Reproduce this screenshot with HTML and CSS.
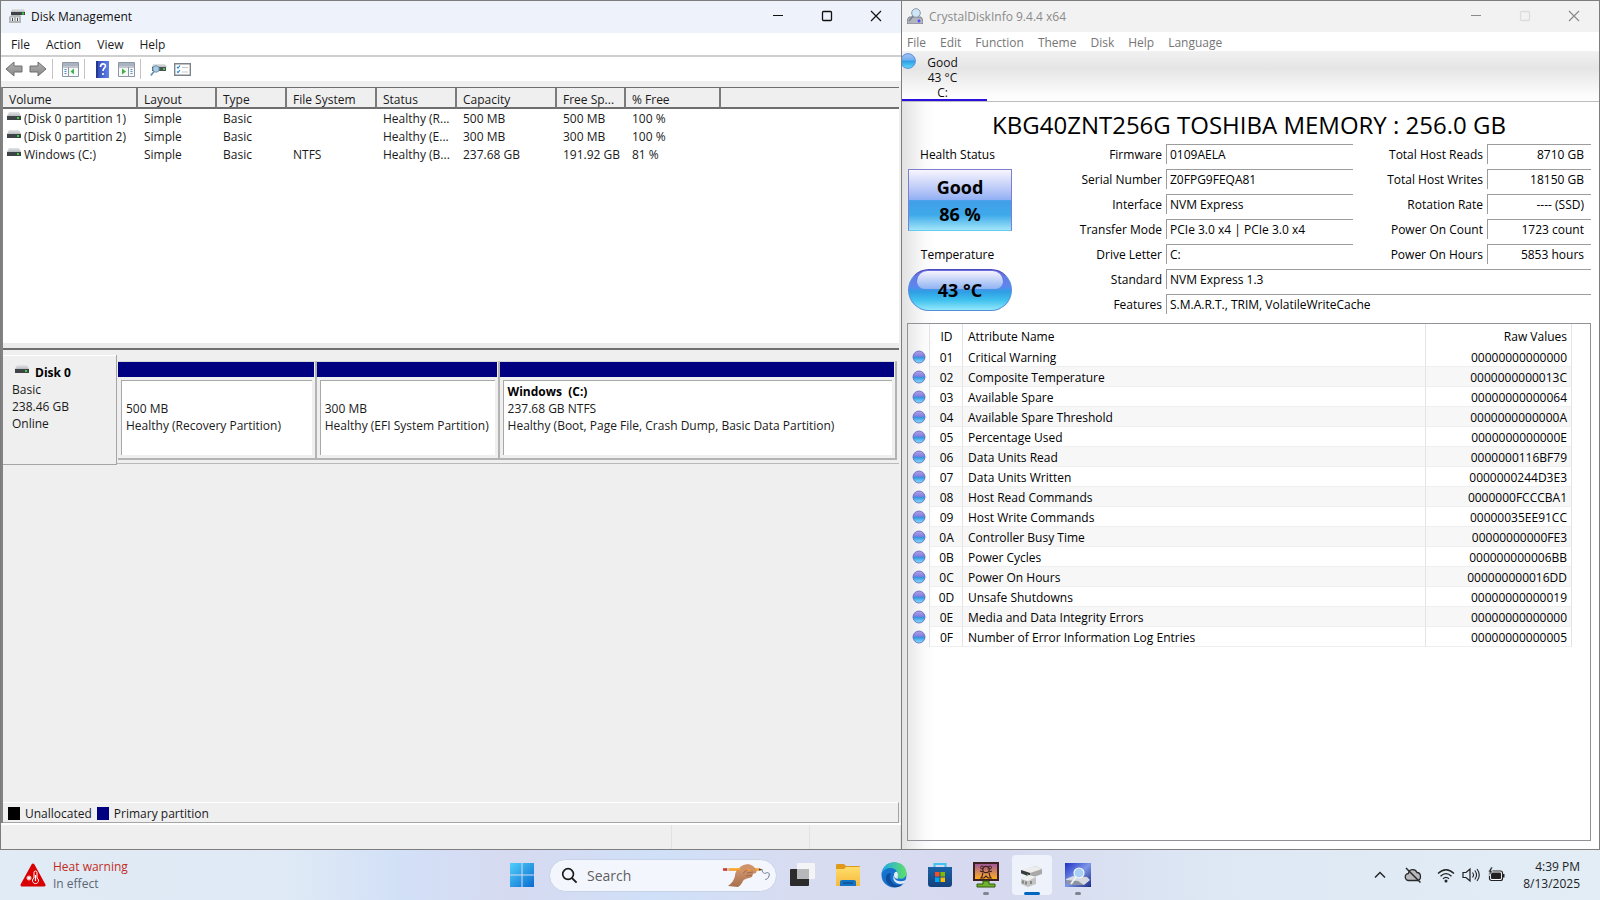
FILE: index.html
```html
<!DOCTYPE html>
<html lang="en">
<head>
    <meta charset="UTF-8">
    <meta name="viewport" content="width=device-width, initial-scale=1">
    <title>Disk Management</title>
    <link rel="stylesheet" href="styles.css">
</head>
<body>

<svg class="defs" aria-hidden="true">
    <defs>
        <linearGradient id="gTop" x1="0" y1="0" x2="0" y2="1"><stop offset="0" stop-color="#e3e5e7"/><stop offset="1" stop-color="#b9bcbf"/></linearGradient>
        <linearGradient id="gArrow" x1="0" y1="0" x2="0" y2="1"><stop offset="0" stop-color="#b0b0b0"/><stop offset="1" stop-color="#8a8a8a"/></linearGradient>
        <linearGradient id="gHelp" x1="0" y1="0" x2="1" y2="0"><stop offset="0" stop-color="#2d46b4"/><stop offset="1" stop-color="#5f83e8"/></linearGradient>
        <linearGradient id="gBall" x1="0" y1="0" x2="0" y2="1"><stop offset="0" stop-color="#b9a0e4"/><stop offset=".45" stop-color="#7d7fe0"/><stop offset=".5" stop-color="#2f8fdc"/><stop offset="1" stop-color="#8fe6fb"/></linearGradient>
        <linearGradient id="gBlue" x1="0" y1="0" x2="0" y2="1"><stop offset="0" stop-color="#a9c4f2"/><stop offset=".45" stop-color="#69aef0"/><stop offset=".5" stop-color="#2b9be4"/><stop offset="1" stop-color="#62dcf8"/></linearGradient>
        <linearGradient id="gWin" x1="0" y1="0" x2="1" y2="1"><stop offset="0" stop-color="#4fd0fb"/><stop offset="1" stop-color="#0a6bd0"/></linearGradient>
        <linearGradient id="gFolder" x1="0" y1="0" x2="0" y2="1"><stop offset="0" stop-color="#ffdd6b"/><stop offset="1" stop-color="#f6b93a"/></linearGradient>
        <linearGradient id="gEdge" x1="0" y1="0" x2="1" y2="0"><stop offset="0" stop-color="#1ea7e8"/><stop offset="1" stop-color="#5fe06a"/></linearGradient>
        <linearGradient id="gStore" x1="0" y1="0" x2="0" y2="1"><stop offset="0" stop-color="#1a62a8"/><stop offset="1" stop-color="#14417c"/></linearGradient>
        <linearGradient id="gSun" x1="0" y1="0" x2="0" y2="1"><stop offset="0" stop-color="#a25a9c"/><stop offset="1" stop-color="#ffae1e"/></linearGradient>
        <linearGradient id="gCdi" x1="0" y1="0" x2="1" y2="1"><stop offset="0" stop-color="#1f2fc4"/><stop offset=".5" stop-color="#7d97e8"/><stop offset="1" stop-color="#1c2a86"/></linearGradient>
        <linearGradient id="gSkin" x1="0" y1="0" x2="0" y2="1"><stop offset="0" stop-color="#dba07a"/><stop offset="1" stop-color="#a86f4c"/></linearGradient>
    </defs>
    <symbol id="drive" viewBox="0 0 14 9">
        <path d="M2 0h10l2 4H0z" fill="url(#gTop)"/>
        <path d="M0 4h14v4H0z" fill="#3d4347"/>
        <path d="M10 5h2v2h-2z" fill="#35d335"/>
    </symbol>
    <symbol id="ball" viewBox="0 0 14 14">
        <circle cx="7" cy="7" r="6" fill="url(#gBall)" stroke="#5a62c4" stroke-width=".8"/>
    </symbol>
    <symbol id="ball-blue" viewBox="0 0 16 16">
        <circle cx="8" cy="8" r="7.400" fill="url(#gBlue)" stroke="#5b8fe0"/>
    </symbol>
    <symbol id="min" viewBox="0 0 12 12"><path d="M1 5.500h10" stroke="currentColor" fill="none"/></symbol>
    <symbol id="max" viewBox="0 0 12 12"><rect x="1.500" y="1.500" width="9" height="9" rx="1" stroke="currentColor" fill="none" stroke-width="1.300"/></symbol>
    <symbol id="close" viewBox="0 0 12 12"><path d="M1 1l10 10M11 1L1 11" stroke="currentColor" fill="none" stroke-width="1.200"/></symbol>
</svg>

<main class="desktop">

    <section class="window dm">
        <header class="titlebar">
            <svg class="app-icon" viewBox="0 0 16 16">
                <path d="M3 1h12l1 3H2z" fill="url(#gTop)"/>
                <path d="M2 4h14v3H2z" fill="#3d4347"/>
                <path d="M13 4.500h2v2h-2z" fill="#35d335"/>
                <path d="M1 8l2-1h8l1 1v7H0V9z" fill="#b4b7ba"/>
                <path d="M2 9.500h3v3.500H2zM7 9.500h3v3.500H7z" fill="#f2f2f2"/>
                <path d="M3 10h1v3H3zM8 10h1v3H8z" fill="#44484b"/>
            </svg>
            <h1>Disk Management</h1>
            <div class="controls">
                <button aria-label="Minimize"><svg><use href="#min"/></svg></button>
                <button aria-label="Maximize"><svg><use href="#max"/></svg></button>
                <button aria-label="Close"><svg><use href="#close"/></svg></button>
            </div>
        </header>
        <nav class="menu">
            <button>File</button>
            <button>Action</button>
            <button>View</button>
            <button>Help</button>
        </nav>
        <div class="toolbar">
            <button aria-label="Back"><svg class="arrow" viewBox="0 0 18 16"><path d="M1 8l8-7v4h8v6H9v4z" fill="url(#gArrow)" stroke="#6e6e6e"/></svg></button>
            <button aria-label="Forward"><svg class="arrow" viewBox="0 0 18 16"><path d="M17 8L9 1v4H1v6h8v4z" fill="url(#gArrow)" stroke="#6e6e6e"/></svg></button>
            <span class="sep"></span>
            <button aria-label="Show console tree"><svg class="pane" viewBox="0 0 17 15">
                <path d="M.5.500h16v14H.5z" fill="#f7f8fa" stroke="#8d96a3"/><path d="M1 1h15v3H1z" fill="#aab3c1"/><path d="M1 5h15M6.500 5v9" stroke="#8d96a3"/>
                <path d="M2.500 7.500h2M2.500 9.500h2M2.500 11.500h2" stroke="#4f8fc4"/><path d="M12 6.500v6L8.500 9.500z" fill="#3db53d"/></svg></button>
            <span class="sep"></span>
            <button aria-label="Help"><svg class="help" viewBox="0 0 13 17"><path d="M0 0h13v17H0z" fill="url(#gHelp)"/><path d="M0 0h2v17H0z" fill="#23388f"/><path d="M4.500 6c0-4 5-4 5-1 0 2-2.500 2-2.500 5" fill="none" stroke="#fff" stroke-width="1.600"/><circle cx="7" cy="13" r="1.100" fill="#fff"/></svg></button>
            <button aria-label="Show action pane"><svg class="pane" viewBox="0 0 17 15">
                <path d="M.5.500h16v14H.5z" fill="#f7f8fa" stroke="#8d96a3"/><path d="M1 1h15v3H1z" fill="#aab3c1"/><path d="M1 5h15M10.500 5v9" stroke="#8d96a3"/>
                <path d="M12.500 7.500h2M12.500 9.500h2M12.500 11.500h2" stroke="#4f8fc4"/><path d="M4 6.500v6L8 9.500z" fill="#3db53d"/></svg></button>
            <span class="sep"></span>
            <button aria-label="Rescan disks"><svg class="pane" viewBox="0 0 17 15">
                <path d="M3 2h12l2 3H2z" fill="url(#gTop)"/><path d="M2 5h14v4H2z" fill="#4c5357"/><path d="M13 6h2v2h-2z" fill="#35d335"/>
                <circle cx="6" cy="7" r="3.200" fill="#a9cde6" stroke="#6f93ad"/><path d="M4 9.500L.8 13.500" stroke="#6a94b5" stroke-width="1.800"/></svg></button>
            <button aria-label="Properties"><svg class="pane" viewBox="0 0 17 15">
                <path d="M.7 1.700h15.600v11.600H.7z" fill="#fff" stroke="#7e8389" stroke-width="1.400"/>
                <path d="M3 5l1 1 2-2.500M3 9.500l1 1L6 8" fill="none" stroke="#2d87d6" stroke-width="1.200"/><path d="M8 5.500h6M8 10h6" stroke="#c3c7cc"/></svg></button>
        </div>

        <div class="view">
            <div class="volumes">
                <table>
                    <colgroup>
                        <col class="c-vol"><col class="c-lay"><col class="c-type"><col class="c-fs"><col class="c-stat"><col class="c-cap"><col class="c-free"><col class="c-pct"><col>
                    </colgroup>
                    <thead>
                        <tr><th>Volume</th><th>Layout</th><th>Type</th><th>File System</th><th>Status</th><th>Capacity</th><th>Free Sp...</th><th>% Free</th><th></th></tr>
                    </thead>
                    <tbody>
                        <tr><td><svg class="drive"><use href="#drive"/></svg>(Disk 0 partition 1)</td><td>Simple</td><td>Basic</td><td></td><td>Healthy (R...</td><td>500 MB</td><td>500 MB</td><td>100 %</td><td></td></tr>
                        <tr><td><svg class="drive"><use href="#drive"/></svg>(Disk 0 partition 2)</td><td>Simple</td><td>Basic</td><td></td><td>Healthy (E...</td><td>300 MB</td><td>300 MB</td><td>100 %</td><td></td></tr>
                        <tr><td><svg class="drive"><use href="#drive"/></svg>Windows (C:)</td><td>Simple</td><td>Basic</td><td>NTFS</td><td>Healthy (B...</td><td>237.68 GB</td><td>191.92 GB</td><td>81 %</td><td></td></tr>
                    </tbody>
                </table>
            </div>

            <div class="graph">
                <div class="disk">
                    <div class="disk-info">
                        <h2><svg class="drive"><use href="#drive"/></svg>Disk 0</h2>
                        <p>Basic</p>
                        <p>238.46 GB</p>
                        <p>Online</p>
                    </div>
                    <div class="parts">
                        <div class="part recovery">
                            <div class="bar"></div>
                            <div class="box"><p>&nbsp;</p><p>500 MB</p><p>Healthy (Recovery Partition)</p></div>
                        </div>
                        <div class="part efi">
                            <div class="bar"></div>
                            <div class="box"><p>&nbsp;</p><p>300 MB</p><p>Healthy (EFI System Partition)</p></div>
                        </div>
                        <div class="part system">
                            <div class="bar"></div>
                            <div class="box"><h3>Windows&nbsp; (C:)</h3><p>237.68 GB NTFS</p><p>Healthy (Boot, Page File, Crash Dump, Basic Data Partition)</p></div>
                        </div>
                    </div>
                </div>
            </div>

            <div class="legend">
                <span class="swatch black"></span>Unallocated
                <span class="swatch navy"></span>Primary partition
            </div>
        </div>
        <footer class="status"><span></span><span></span><span></span></footer>
    </section>

    <section class="window cdi">
        <header class="titlebar">
            <svg class="app-icon" viewBox="0 0 16 16">
                <path d="M2 9h12l2 3v4H0v-4z" fill="#b3b5be" stroke="#6f7280" stroke-width=".8"/>
                <circle cx="9" cy="5" r="4.300" fill="#cfe6f7" stroke="#8796a8"/>
                <path d="M6 8l-4 5" stroke="#7d8593" stroke-width="1.800"/>
                <circle cx="12" cy="13" r="1.400" fill="#4a4aff"/>
            </svg>
            <h1>CrystalDiskInfo 9.4.4 x64</h1>
            <div class="controls">
                <button aria-label="Minimize"><svg><use href="#min"/></svg></button>
                <button aria-label="Maximize" disabled><svg><use href="#max"/></svg></button>
                <button aria-label="Close"><svg><use href="#close"/></svg></button>
            </div>
        </header>
        <nav class="menu">
            <button>File</button>
            <button>Edit</button>
            <button>Function</button>
            <button>Theme</button>
            <button>Disk</button>
            <button>Help</button>
            <button>Language</button>
        </nav>
        <div class="drives">
            <button class="drive-tab">
                <svg><use href="#ball-blue"/></svg>
                <span>Good<br>43 °C<br>C:</span>
            </button>
        </div>

        <div class="info">
            <h2 class="model">KBG40ZNT256G TOSHIBA MEMORY : 256.0 GB</h2>
            <div class="summary">
                <div class="health">
                    <h3>Health Status</h3>
                    <button class="good">Good<br>86 %</button>
                    <h3>Temperature</h3>
                    <button class="temp">43 °C</button>
                </div>
                <form class="fields">
                    <label for="fw">Firmware</label><input id="fw" value="0109AELA" readonly>
                    <label for="reads">Total Host Reads</label><input id="reads" class="num" value="8710 GB" readonly>
                    <label for="sn">Serial Number</label><input id="sn" value="Z0FPG9FEQA81" readonly>
                    <label for="writes">Total Host Writes</label><input id="writes" class="num" value="18150 GB" readonly>
                    <label for="if">Interface</label><input id="if" value="NVM Express" readonly>
                    <label for="rot">Rotation Rate</label><input id="rot" class="num" value="---- (SSD)" readonly>
                    <label for="tm">Transfer Mode</label><input id="tm" value="PCIe 3.0 x4 | PCIe 3.0 x4" readonly>
                    <label for="cnt">Power On Count</label><input id="cnt" class="num" value="1723 count" readonly>
                    <label for="dl">Drive Letter</label><input id="dl" value="C:" readonly>
                    <label for="hrs">Power On Hours</label><input id="hrs" class="num" value="5853 hours" readonly>
                    <label for="std">Standard</label><input id="std" class="long" value="NVM Express 1.3" readonly>
                    <label for="feat">Features</label><input id="feat" class="long" value="S.M.A.R.T., TRIM, VolatileWriteCache" readonly>
                </form>
            </div>

            <div class="smart">
                <table>
                    <colgroup><col class="s-ball"><col class="s-id"><col><col class="s-raw"></colgroup>
                    <thead>
                        <tr><th></th><th>ID</th><th>Attribute Name</th><th>Raw Values</th></tr>
                    </thead>
                    <tbody>
                        <tr><td><svg><use href="#ball"/></svg></td><td>01</td><td>Critical Warning</td><td>00000000000000</td></tr>
                        <tr><td><svg><use href="#ball"/></svg></td><td>02</td><td>Composite Temperature</td><td>0000000000013C</td></tr>
                        <tr><td><svg><use href="#ball"/></svg></td><td>03</td><td>Available Spare</td><td>00000000000064</td></tr>
                        <tr><td><svg><use href="#ball"/></svg></td><td>04</td><td>Available Spare Threshold</td><td>0000000000000A</td></tr>
                        <tr><td><svg><use href="#ball"/></svg></td><td>05</td><td>Percentage Used</td><td>0000000000000E</td></tr>
                        <tr><td><svg><use href="#ball"/></svg></td><td>06</td><td>Data Units Read</td><td>0000000116BF79</td></tr>
                        <tr><td><svg><use href="#ball"/></svg></td><td>07</td><td>Data Units Written</td><td>0000000244D3E3</td></tr>
                        <tr><td><svg><use href="#ball"/></svg></td><td>08</td><td>Host Read Commands</td><td>0000000FCCCBA1</td></tr>
                        <tr><td><svg><use href="#ball"/></svg></td><td>09</td><td>Host Write Commands</td><td>00000035EE91CC</td></tr>
                        <tr><td><svg><use href="#ball"/></svg></td><td>0A</td><td>Controller Busy Time</td><td>00000000000FE3</td></tr>
                        <tr><td><svg><use href="#ball"/></svg></td><td>0B</td><td>Power Cycles</td><td>000000000006BB</td></tr>
                        <tr><td><svg><use href="#ball"/></svg></td><td>0C</td><td>Power On Hours</td><td>000000000016DD</td></tr>
                        <tr><td><svg><use href="#ball"/></svg></td><td>0D</td><td>Unsafe Shutdowns</td><td>00000000000019</td></tr>
                        <tr><td><svg><use href="#ball"/></svg></td><td>0E</td><td>Media and Data Integrity Errors</td><td>00000000000000</td></tr>
                        <tr><td><svg><use href="#ball"/></svg></td><td>0F</td><td>Number of Error Information Log Entries</td><td>00000000000005</td></tr>
                    </tbody>
                </table>
            </div>
        </div>
    </section>
</main>

<footer class="taskbar">
    <button class="weather">
        <svg viewBox="0 0 26 24"><path d="M13 2L24 22H2z" fill="#d80000" stroke="#d80000" stroke-width="3" stroke-linejoin="round"/>
            <circle cx="9" cy="15" r="1.800" fill="#fff"/><path d="M9 12v6M6 15h6M7 13l4 4M11 13l-4 4" stroke="#fff" stroke-width=".6"/>
            <path d="M14 15V9.500a1.500 1.500 0 0 1 3 0V15a3 3 0 1 1-3 0z" fill="#d80000" stroke="#fff"/><path d="M15.500 12v6" stroke="#fff" stroke-width="1.200"/></svg>
        <span><b>Heat warning</b><br>In effect</span>
    </button>

    <div class="apps">
        <button class="app" aria-label="Start"><svg viewBox="0 0 26 26"><path d="M1 1h11.500v11.500H1zM13.500 1H25v11.500H13.500zM1 13.500h11.500V25H1zM13.500 13.500H25V25H13.500z" fill="url(#gWin)"/></svg></button>
        <div class="search">
            <svg class="lens" viewBox="0 0 18 18"><circle cx="7.500" cy="7.500" r="5.700" fill="none" stroke="#1b1b1b" stroke-width="1.800"/><path d="M11.700 11.700L16.500 16.500" stroke="#1b1b1b" stroke-width="2"/></svg>
            <input type="text" placeholder="Search" aria-label="Search">
            <svg class="hand" viewBox="0 0 48 26">
                <path d="M5 24c4-3 6-6 7-10 0-5 4-9 9-11 3-1 6-1 9 1l4 4-1 3-3 1-1 3-3 1c-3 1-5 1-6 3s-3 5-5 6z" fill="url(#gSkin)"/>
                <path d="M2 7.500h34" stroke="#f08f1c" stroke-width="2.400"/><path d="M2 7h34" stroke="#ffc042" stroke-width="1"/><path d="M0 7.500h4" stroke="#cf3a3a" stroke-width="2.600"/><path d="M4 7.500h2" stroke="#c9c9d2" stroke-width="2.600"/>
                <path d="M36 6.300l4 1.400-4 1z" fill="#5b4636"/>
                <path d="M18 5c3-3 8-3 11-1l4 3-2 2-6-2-5 4-4-1z" fill="#cf936c"/>
                <path d="M24 11l6-1M23 14l6-1M20 11l4-3" stroke="#a2694a" fill="none"/>
                <path d="M39 8c1 3 2 4 4 3s4 0 3 3-3 4-4 3" fill="none" stroke="#6f7686"/></svg>
        </div>
        <button class="app" aria-label="Task view"><svg viewBox="0 0 26 26"><rect x="1" y="7" width="19" height="17" rx="1" fill="#2b2b2b"/><rect x="8" y="1" width="18" height="16" rx="1" fill="#f4f4f6"/><path d="M8 7h12v10H8z" fill="#b7b8bb"/></svg></button>
        <button class="app" aria-label="File Explorer"><svg viewBox="0 0 26 26"><path d="M1 3q0-1 1-1h7l2 2h13q1 0 1 1v6H1z" fill="#e09a1b"/><path d="M1 7h8l2-2h14v18q0 1-1 1H2q-1 0-1-1z" fill="url(#gFolder)"/><path d="M5 24v-4q0-2 2-2h12q2 0 2 2v4z" fill="#1573c6"/><path d="M8 21h10" stroke="#0b5292" stroke-width="1.500"/></svg></button>
        <button class="app" aria-label="Edge"><svg viewBox="0 0 26 26"><circle cx="13" cy="13" r="12.500" fill="#1672cc"/><path d="M.6 12C2-4 25-3 25.500 11c.2 5-5 7-9 5-2-1 0-2 0-4 0-7-12-9-15.900 0z" fill="url(#gEdge)"/><path d="M10 11c-3 6 2 13 9 12 2 0 3-1 4.500-2C17 29 3 25 5 14c.6-2 3-3 5-3z" fill="#0d4f9e"/><path d="M13 13c-1 5 5 8 12 5l-2 3c-6 3-13-2-10-8z" fill="#e4eaf7"/><path d="M16 10c-3-1-4 4-2 6l3 1c-1-2 0-3 0-5z" fill="#e4eaf7"/></svg></button>
        <button class="app" aria-label="Store"><svg viewBox="0 0 26 26"><path d="M7.500 6V2h11v4" fill="none" stroke="#3fc1f2" stroke-width="2"/><path d="M1 5h24v17q0 3-3 3H4q-3 0-3-3z" fill="url(#gStore)"/><path d="M8 10h4.500v4.500H8z" fill="#f25022"/><path d="M13.500 10H18v4.500h-4.500z" fill="#7fba00"/><path d="M8 15.500h4.500V20H8z" fill="#00a4ef"/><path d="M13.500 15.500H18V20h-4.500z" fill="#ffb900"/></svg></button>
        <button class="app running" aria-label="Monitor"><svg viewBox="0 0 26 26"><path d="M0 0h26v19H0z" fill="#3d2020"/><path d="M2 2h22v15H2z" fill="url(#gSun)"/><circle cx="9" cy="5.500" r="1.500" fill="none" stroke="#40201c"/><circle cx="17" cy="5.500" r="1.500" fill="none" stroke="#40201c"/><circle cx="13" cy="7.500" r="3.200" fill="none" stroke="#40201c" stroke-width="1.200"/><path d="M10 10l-3-1M16 10l3-1M10 11c-1 2 0 3-2 5h3l2-2 2 2h3c-2-2-1-3-2-5M12 7h.5M14 7h.5" fill="none" stroke="#40201c" stroke-width="1.200"/><path d="M10 19h6v3h6v3H4v-3h6z" fill="#6fb52b" stroke="#35580f"/></svg></button>
        <button class="app running active" aria-label="Disk Management"><svg viewBox="0 0 26 26"><path d="M2 9l14-5 7 3v5l-11 4-5-3-5-1z" fill="#a9a9a9"/><path d="M2 8l14-4 7 3-12 4z" fill="#ececec"/><path d="M2 8l9 3v4l-9-4z" fill="#38393a"/><path d="M8 12l2 1v1l-2-1z" fill="#35d335"/><path d="M2 17l8-4 7 2v7l-8 3-7-3z" fill="#c3c3c3"/><path d="M2 17l8-4 7 2-8 4z" fill="#efefef"/><path d="M4 18.500v3M7 19.500v3M12 19v3" stroke="#5f6164" stroke-width="1.200"/></svg></button>
        <button class="app running" aria-label="CrystalDiskInfo"><svg viewBox="0 0 26 26"><path d="M0 1h26v24H0z" fill="url(#gCdi)"/><path d="M1 17l7-3 14 1 3 3-6 5H6l-5-3z" fill="#d6d9e0"/><path d="M1 18l12 1 6 4H6l-5-2z" fill="#8d93a3"/><circle cx="14" cy="11" r="5" fill="#a9cff5" stroke="#eef4fc" stroke-width="1.200"/><path d="M11 15l-5 7" stroke="#eef1f6" stroke-width="2"/></svg></button>
    </div>

    <div class="tray">
        <button aria-label="Show hidden icons"><svg viewBox="0 0 18 18"><path d="M4 11.500L9 6.500l5 5" fill="none" stroke="#222" stroke-width="1.400"/></svg></button>
        <button class="cloud" aria-label="OneDrive"><svg viewBox="0 0 18 18"><path d="M5 14.500a3.500 3.500 0 0 1-.6-7C5 3 11 2 13 6.500c4 0 5 7 .5 8z" fill="#b9b9bd" stroke="#2a2a2a" stroke-width="1.300"/><path d="M2 2l14.500 14.500" stroke="#2a2a2a" stroke-width="1.500"/></svg></button>
        <button class="net" aria-label="Network, volume and battery">
            <svg viewBox="0 0 18 18"><path d="M1 7.500q8-7.500 16 0M3.500 10.200q5.500-5.200 11 0M6 12.700q3-2.700 6 0" fill="none" stroke="#222" stroke-width="1.300"/><circle cx="9" cy="15" r="1.500" fill="#222"/></svg>
            <svg viewBox="0 0 18 18"><path d="M1 6.500h3l4-3.500v12l-4-3.500H1z" fill="none" stroke="#222" stroke-width="1.200"/><path d="M10.500 6.500q2 2.500 0 5M12.800 4.500q3.500 4.500 0 9M15 3q4.500 6 0 12" fill="none" stroke="#222" stroke-width="1.100"/></svg>
            <svg viewBox="0 0 18 18"><rect x="2.500" y="5" width="13" height="9.500" rx="2" fill="#fff" stroke="#222" stroke-width="1.200"/><rect x="4" y="6.500" width="10" height="6.500" rx="1" fill="#222"/><path d="M16 8h1.500v3.500H16z" fill="#222"/><path d="M4 1L1 6h2L2 10l4-5H4l2-4z" fill="#222" stroke="#dfe9f6" stroke-width=".7"/></svg>
        </button>
        <button class="clock">4:39 PM<br>8/13/2025</button>
    </div>
</footer>

</body>
</html>
```
FILE: styles.css
```css
* {
    box-sizing: border-box;
}

body {
    margin: 0;
    height: 100vh;
    display: grid;
    grid-template-rows: 1fr 50px;
    font-family: "Open Sans", "Noto Sans", sans-serif;
    font-size: 12px;
    line-height: 17px;
    color: #1a1a1a;
    background: #dfe6f4;
}

h1, h2, h3, p {
    margin: 0;
    font-size: 12px;
    font-weight: normal;
}

button, input {
    font: inherit;
    color: inherit;
    border: none;
    background: none;
    padding: 0;
    margin: 0;
}

svg {
    display: block;
}

.defs {
    position: absolute;
    width: 0;
    height: 0;
}

.desktop {
    display: grid;
    grid-template-columns: 902fr 698fr;
    min-height: 0;
}

.window {
    display: flex;
    flex-direction: column;
    min-width: 0;
    border: 1px solid #7d7d7d;
}

.titlebar {
    display: flex;
    align-items: center;
    height: 32px;
    padding-left: 8px;
}

.app-icon {
    width: 16px;
    height: 16px;
    margin-right: 6px;
}

.controls {
    display: flex;
    margin-left: auto;
}

.controls button {
    display: flex;
    align-items: center;
    justify-content: center;
    width: 49px;
    height: 30px;
}

.controls svg {
    width: 12px;
    height: 12px;
}

.controls button:disabled {
    color: #dcdcdc;
}

.menu {
    display: flex;
    background: #fff;
}

/* Disk Management */
.dm {
    background: #efefef;
}

.dm .titlebar {
    padding: 0 1px 2px 8px;
    background: #eef3fb;
    color: #111;
}

.dm .menu {
    height: 24px;
    padding: 1px 0 0 10px;
    gap: 16px;
    border-bottom: 2px solid #cfcfcf;
}

.toolbar {
    display: flex;
    align-items: center;
    height: 24px;
    padding-left: 1px;
    background: #fff;
}

.toolbar button {
    display: flex;
    justify-content: center;
    width: 24px;
}

.arrow {
    width: 18px;
    height: 16px;
}

.pane {
    width: 17px;
    height: 15px;
}

.help {
    width: 13px;
    height: 17px;
}

.sep {
    width: 1px;
    height: 20px;
    margin: 0 5px 0 2px;
    background: #c4c4c4;
}

.view {
    flex: 1;
    display: flex;
    flex-direction: column;
    margin-top: 6px;
    border-left: 2px solid #828282;
    margin-right: 2px;
}

.volumes {
    height: 263px;
    background: #fff;
    border-top: 1px solid #6e6e6e;
    border-bottom: 2px solid #707070;
    box-shadow: inset 0 -5px #ececec;
}

table {
    width: 100%;
    table-layout: fixed;
    border-collapse: separate;
    border-spacing: 0;
}

th {
    text-align: left;
    font-weight: normal;
}

td, th {
    padding: 0;
    white-space: nowrap;
}

.volumes th {
    height: 21px;
    padding: 4px 0 0 6px;
    background: #efefef;
    border-right: 2px solid #7b7b7b;
    border-bottom: 2px solid #6e6e6e;
    line-height: 15px;
}

.volumes th:last-child {
    border-right: none;
}

.volumes td {
    height: 18px;
    padding-left: 6px;
}

.volumes td:first-child {
    padding-left: 4px;
}

.drive {
    display: inline-block;
    width: 14px;
    height: 9px;
    margin: 0 3px 2px 0;
}

.c-vol { width: 135px; }
.c-lay { width: 79px; }
.c-type { width: 70px; }
.c-fs { width: 90px; }
.c-stat { width: 80px; }
.c-cap { width: 100px; }
.c-free { width: 69px; }
.c-pct { width: 95px; }

.graph {
    flex: 1;
    padding-top: 5px;
}

.disk {
    display: flex;
}

.disk-info {
    width: 114px;
    height: 110px;
    padding: 9px 0 0 9px;
    border-right: 1px solid #a5a5a5;
    border-bottom: 1px solid #a5a5a5;
    box-shadow: inset 0 1px #fff;
}

.disk-info h2, .box h3 {
    font-weight: bold;
    color: #000;
}

.disk-info .drive {
    margin: 0 6px 3px 3px;
}

.parts {
    flex: 1;
    display: flex;
    height: 109px;
    padding: 6px 2px 3px 1px;
    border-bottom: 1px solid #b9b9b9;
}

.part {
    display: flex;
    flex-direction: column;
    min-width: 0;
    border-right: 2px solid #b3b3b3;
    border-bottom: 2px solid #b3b3b3;
    border-top: 1px solid #d8d8d8;
}

.recovery { flex: 198; }
.efi { flex: 182; }
.system { flex: 398; }

.bar {
    height: 15px;
    margin-right: 1px;
    background: #000080;
}

.box {
    flex: 1;
    margin: 3px;
    padding: 2px 0 0 4px;
    background: #fff;
    border-top: 1px solid #a8a8a8;
    border-left: 1px solid #a8a8a8;
    white-space: nowrap;
    overflow: hidden;
}

.legend {
    display: flex;
    align-items: center;
    height: 21px;
    padding: 1px 0 0 5px;
    border-top: 1px solid #fff;
    border-right: 1px solid #a5a5a5;
    border-bottom: 1px solid #a5a5a5;
}

.swatch {
    width: 12px;
    height: 13px;
    margin-right: 5px;
}

.black {
    background: #000;
}

.navy {
    margin-left: 5px;
    background: #000080;
}

.status {
    display: flex;
    height: 26px;
    border-top: 2px solid #fff;
}

.status span {
    width: 91px;
    border-right: 1px solid #e2e2e2;
}

.status span:nth-child(1) {
    flex: 1;
}

.status span:nth-child(2) {
    width: 138px;
}

/* CrystalDiskInfo */
.cdi {
    border-left: none;
    background: #fff;
}

.cdi .titlebar {
    height: 31px;
    padding: 0 1px 1px 5px;
    background: #f2f2f2;
    color: #8a8a8a;
}

.cdi .menu {
    height: 19px;
    padding: 1px 0 0 5px;
    gap: 14px;
    color: #767676;
}

.drives {
    height: 51px;
    overflow: hidden;
    border-bottom: 1px solid #bdbdbd;
    background: linear-gradient(#f1f1f1, #e5e5e5 35%, #fdfdfd 90%);
}

.drive-tab {
    position: relative;
    width: 85px;
    height: 50px;
    border-bottom: 2px solid #2a10e0;
    line-height: 15px;
    color: #111;
}

.drive-tab svg {
    position: absolute;
    left: -2px;
    top: 2px;
    width: 16px;
    height: 16px;
}

.drive-tab span {
    display: block;
    padding: 4px 4px 0 0;
}

.info {
    flex: 1;
    display: flex;
    flex-direction: column;
    padding: 8px 8px 8px 5px;
    background: linear-gradient(90deg, #e2e2e2, #fafafa 22px, #fff 34px);
    color: #000;
}

.model {
    font-size: 24px;
    line-height: 30px;
    text-align: center;
}

.summary {
    display: flex;
    justify-content: space-between;
    margin-top: 4px;
    padding-left: 1px;
}

.health {
    width: 104px;
    text-align: center;
}

.health h3 {
    height: 25px;
    padding-top: 2px;
    margin-right: 5px;
}

.health button {
    display: block;
    width: 104px;
    font-size: 18px;
    font-weight: bold;
}

.good {
    height: 62px;
    margin-bottom: 13px;
    padding-top: 1px;
    line-height: 27px;
    border: 1px solid #7c7fd0;
    border-bottom-color: #67c9f0;
    background: linear-gradient(#f8f6fe, #a9bdf6 40%, #8fb0f4 50%, #409fe8 51%, #3fa9ea 75%, #a0e6f8);
}

.temp {
    position: relative;
    z-index: 0;
    height: 42px;
    border: 1px solid #4f8fdc;
    border-top-color: #4a48b4;
    border-radius: 21px;
    background: linear-gradient(#6a6fe0, #5f86ee 40%, #2f9fe4 55%, #3fc0ee 75%, #93e8fb);
}

/* glossy highlight on the upper half */
.temp::before {
    content: "";
    position: absolute;
    z-index: -1;
    left: 8px;
    right: 8px;
    top: 1px;
    height: 18px;
    border-radius: 14px 14px 10px 10px;
    background: linear-gradient(#f6f3fd, #8fb4f3);
}

.fields {
    width: 543px;
    display: grid;
    grid-template-columns: 118px 187px 134px 104px;
    grid-auto-rows: 20px;
    row-gap: 5px;
    align-items: center;
}

.fields label {
    padding-right: 4px;
    text-align: right;
}

.fields input {
    width: 100%;
    height: 20px;
    padding: 0 7px 0 3px;
    border-top: 1px solid #9c9c9c;
    border-left: 1px solid #9c9c9c;
}

.fields .num {
    text-align: right;
}

.fields .long {
    grid-column: span 3;
}

.smart {
    flex: 1;
    margin-top: 9px;
    padding-right: 18px;
    border: 1px solid #8f9296;
}

.s-ball { width: 22px; }
.s-id { width: 33px; }
.s-raw { width: 146px; }

.smart th, .smart td {
    height: 20px;
    padding: 1px 0 0 5px;
    border-right: 1px solid #e4e4e4;
}

.smart th {
    height: 23px;
    padding-top: 2px;
}

.smart td:not(:first-child) {
    border-bottom: 1px solid #efefef;
}

.smart tr > :first-child {
    padding: 0 0 0 4px;
}

.smart tr > :nth-child(2) {
    padding-left: 1px;
    text-align: center;
}

.smart tr > :last-child {
    padding-right: 4px;
    text-align: right;
}

.smart tr:nth-child(even) td:not(:first-child) {
    background: #f7f7f7;
}

.smart svg {
    width: 14px;
    height: 14px;
}

/* Taskbar */
.taskbar {
    display: grid;
    grid-template-columns: 1fr auto 1fr;
    align-items: center;
    background: linear-gradient(90deg, #e0ebf5, #dfeaf6 18%, #d2e0f7 25%, #d6daf0 32%, #cfe0f8 41%, #d8dcf1 50%, #d6d9ef 62%, #dde8f4 76%, #e2edf6);
}

.taskbar button {
    color: #222;
}

.weather {
    display: flex;
    align-items: center;
    gap: 7px;
    padding-left: 20px;
    text-align: left;
}

.weather svg {
    width: 26px;
    height: 24px;
}

.weather b {
    font-weight: normal;
    color: #c42b1c;
}

.weather span {
    color: #5d6673;
}

.apps {
    display: flex;
    align-items: center;
}

.app {
    position: relative;
    display: flex;
    align-items: center;
    justify-content: center;
    width: 40px;
    height: 40px;
    margin: 0 3px;
    border-radius: 4px;
}

.app svg {
    width: 26px;
    height: 26px;
}

.running::after {
    content: "";
    position: absolute;
    left: 50%;
    bottom: 0;
    width: 6px;
    height: 3px;
    margin-left: -3px;
    border-radius: 2px;
    background: #7f858e;
}

.active {
    background: #eef2fb;
}

.active::after {
    width: 16px;
    margin-left: -8px;
    background: #0067c0;
}

.search {
    display: flex;
    align-items: center;
    width: 228px;
    height: 33px;
    margin: 0 2px 0 4px;
    padding: 0 5px 0 11px;
    border: 1px solid #c9d3e8;
    border-radius: 17px;
    background: #f3f7fd;
}

.search input {
    flex: 1;
    min-width: 0;
    padding-left: 9px;
    font-size: 14px;
    outline: none;
}

.search input::placeholder {
    color: #5f5f5f;
    opacity: 1;
}

.lens {
    width: 17px;
    height: 17px;
}

.hand {
    width: 48px;
    height: 26px;
}

.tray {
    display: flex;
    align-items: center;
    justify-content: flex-end;
    padding-right: 20px;
}

.tray svg {
    width: 18px;
    height: 18px;
}

.cloud {
    margin: 0 15px;
}

.net {
    display: flex;
    gap: 7px;
}

.clock {
    width: 75px;
    text-align: right;
}
```
